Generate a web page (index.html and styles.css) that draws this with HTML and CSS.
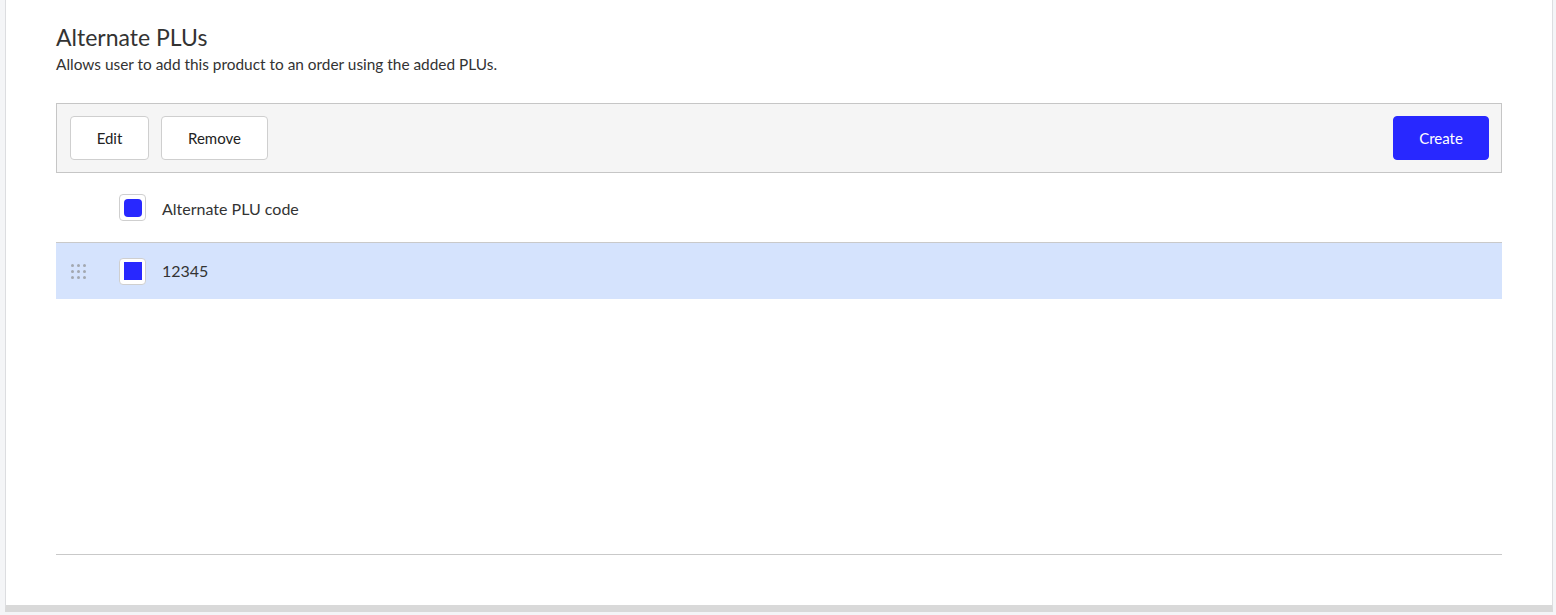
FILE: index.html
```html
<!DOCTYPE html>
<html lang="en">
<head>
<meta charset="utf-8">
<title>Alternate PLUs</title>
<link rel="stylesheet" href="styles.css">
</head>
<body>
<div class="page">
  <section class="card">
    <h1 class="title">Alternate PLUs</h1>
    <p class="subtitle">Allows user to add this product to an order using the added PLUs.</p>
    <div class="toolbar">
      <div class="toolbar-left">
        <button class="btn">Edit</button>
        <button class="btn btn-remove">Remove</button>
      </div>
      <button class="btn btn-primary">Create</button>
    </div>
    <div class="table">
      <div class="row row-head">
        <div class="handle-cell"></div>
        <div class="check-cell"><span class="checkbox"><span class="mark mark-round"></span></span></div>
        <div class="text-cell">Alternate PLU code</div>
      </div>
      <div class="row row-data">
        <div class="handle-cell">
          <svg class="handle" width="16" height="15" viewBox="0 0 16 15" aria-hidden="true">
            <g fill="#a3a8b0">
              <circle cx="1.5" cy="1.5" r="1.5"/><circle cx="7.5" cy="1.5" r="1.5"/><circle cx="13.5" cy="1.5" r="1.5"/>
              <circle cx="1.5" cy="7.5" r="1.5"/><circle cx="7.5" cy="7.5" r="1.5"/><circle cx="13.5" cy="7.5" r="1.5"/>
              <circle cx="1.5" cy="13.5" r="1.5"/><circle cx="7.5" cy="13.5" r="1.5"/><circle cx="13.5" cy="13.5" r="1.5"/>
            </g>
          </svg>
        </div>
        <div class="check-cell"><span class="checkbox checkbox-white"><span class="mark"></span></span></div>
        <div class="text-cell">12345</div>
      </div>
    </div>
    <div class="spacer"></div>
    <div class="footer-line"></div>
  </section>
</div>
</body>
</html>
```
FILE: styles.css
```css
* { box-sizing: border-box; }
html, body { margin: 0; padding: 0; }
body {
  background: #f4f5f7;
  font-family: "Source Sans Pro", Lato, "Noto Sans", sans-serif;
  color: #333;
  height: 615px;
  overflow: hidden;
}
.page {
  padding-left: 5px;
  width: 1553px;
}
.card {
  background: #fff;
  border-left: 1px solid #dcdde0;
  border-right: 1px solid #dcdde0;
  border-bottom: 7px solid #d9d9d9;
  height: 612px;
  padding: 22px 50px 0 50px;
  display: flex;
  flex-direction: column;
}
.title {
  margin: 0;
  font-size: 23px;
  font-weight: 400;
  line-height: 30px;
  color: #333;
}
.subtitle {
  margin: 3px 0 0 0;
  font-size: 15.4px;
  line-height: 19px;
  color: #333;
}
.toolbar {
  margin-top: 29px;
  height: 70px;
  background: #f5f5f5;
  border: 1px solid #c6c6c6;
  display: flex;
  align-items: center;
  justify-content: space-between;
  padding: 0 12px 0 13px;
}
.toolbar-left { display: flex; gap: 12px; }
.btn {
  font-family: inherit;
  font-size: 15px;
  color: #222;
  height: 44px;
  background: #fff;
  border: 1px solid #cfcfcf;
  border-radius: 4px;
  padding: 0;
  width: 79px;
}
.btn-remove { width: 107px; }
.btn-primary {
  width: 96px;
  background: #2828ff;
  border-color: #2828ff;
  color: #fff;
}
.row {
  display: flex;
  align-items: center;
}
.row-head {
  height: 70px;
  border-bottom: 1px solid #c9c9c9;
}
.row-data {
  height: 56px;
  background: #d5e3fd;
}
.handle-cell {
  width: 63px;
  padding-left: 15px;
  display: flex;
  align-items: center;
}
.check-cell {
  width: 43px;
  display: flex;
  align-items: center;
}
.checkbox {
  width: 27px;
  height: 27px;
  border: 1px solid #cfcfcf;
  border-radius: 4px;
  background: #fff;
  display: flex;
  align-items: center;
  justify-content: center;
}
.mark {
  width: 18px;
  height: 18px;
  background: #2828ff;
}
.mark-round { border-radius: 4px; }
.text-cell {
  font-size: 16px;
  color: #333;
}
.row-head .text-cell { padding-top: 1px; }
.row-data .text-cell { margin-top: -2px; }
.spacer { height: 255px; }
.footer-line {
  height: 1px;
  background: #c9c9c9;
}
```
